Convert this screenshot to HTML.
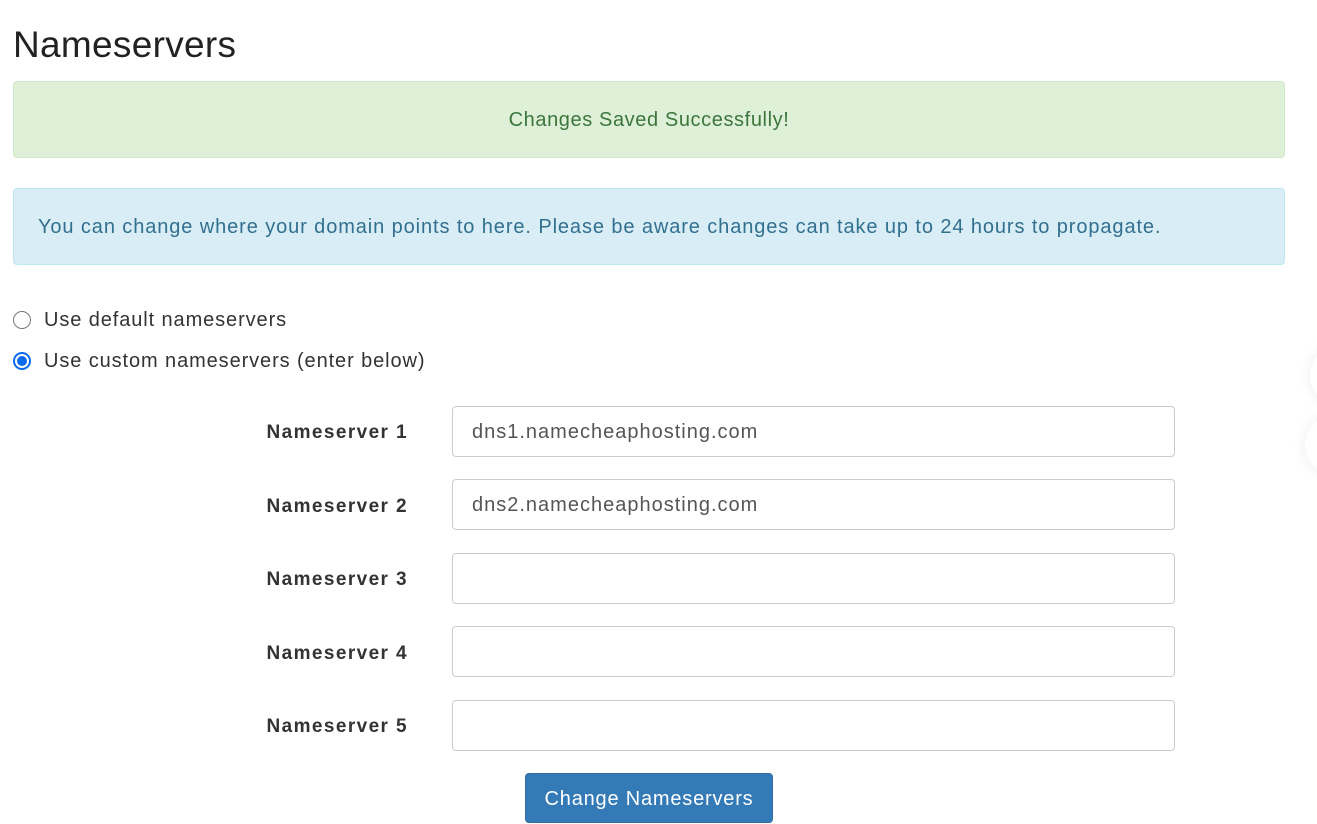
<!DOCTYPE html>
<html><head><style>
body{margin:0;width:1317px;height:814px;overflow:hidden;background:#fff;font-family:"Liberation Sans","DejaVu Sans",sans-serif;color:#333;position:relative}
h1{position:absolute;left:13px;top:24px;margin:0;font-weight:normal;font-size:37px;color:#222;letter-spacing:0.3px}
.alert{position:absolute;left:13px;width:1272px;height:77px;border:1px solid;border-radius:4px;box-sizing:border-box;font-size:20px;line-height:77px}
.ok{top:81px;background:#dff0d8;border-color:#d0e9c6;color:#3c763d;text-align:center;letter-spacing:0.6px}
.info{top:188px;background:#d9edf7;border-color:#bce8f1;color:#31708f;padding-left:24px;letter-spacing:0.9px}
.radio{position:absolute;left:13px;font-size:20px;color:#333;letter-spacing:0.9px}
.radio span.c{display:inline-block;width:18px;height:18px;border-radius:50%;border:1px solid #777;box-sizing:border-box;vertical-align:-3px;margin-right:13px}
.radio span.s{border:2px solid #0b6bf0;position:relative}
.radio span.s:after{content:"";position:absolute;left:2px;top:2px;width:10px;height:10px;border-radius:50%;background:#0b6bf0}
.lbl{position:absolute;width:408px;text-align:right;font-weight:bold;font-size:19px;color:#333;left:0;letter-spacing:1.4px}
.inp{position:absolute;left:452px;width:723px;height:51px;border:1px solid #ccc;border-radius:4px;box-sizing:border-box;font-size:20px;color:#555;padding-left:19px;line-height:51px;letter-spacing:1px}
.btn{position:absolute;left:525px;top:773px;width:248px;height:50px;background:#337ab7;border:1px solid #2e6da4;border-radius:4px;box-sizing:border-box;color:#fff;font-size:20px;text-align:center;line-height:50px;letter-spacing:0.8px}
.sh{position:absolute;border-radius:50%;box-shadow:0 0 14px rgba(0,0,0,0.08);background:#fff}
</style></head><body>
<h1>Nameservers</h1>
<div class="alert ok">Changes Saved Successfully!</div>
<div class="alert info">You can change where your domain points to here. Please be aware changes can take up to 24 hours to propagate.</div>
<div class="radio" style="top:309px"><span class="c"></span>Use default nameservers</div>
<div class="radio" style="top:350px"><span class="c s"></span>Use custom nameservers (enter below)</div>
<div class="lbl" style="top:422px">Nameserver 1</div><div class="inp" style="top:406px">dns1.namecheaphosting.com</div>
<div class="lbl" style="top:496px">Nameserver 2</div><div class="inp" style="top:479px">dns2.namecheaphosting.com</div>
<div class="lbl" style="top:569px">Nameserver 3</div><div class="inp" style="top:553px"></div>
<div class="lbl" style="top:643px">Nameserver 4</div><div class="inp" style="top:626px"></div>
<div class="lbl" style="top:716px">Nameserver 5</div><div class="inp" style="top:700px"></div>
<div class="btn">Change Nameservers</div>
<div class="sh" style="left:1310px;top:345px;width:60px;height:60px"></div>
<div class="sh" style="left:1305px;top:415px;width:60px;height:60px"></div>
</body></html>
